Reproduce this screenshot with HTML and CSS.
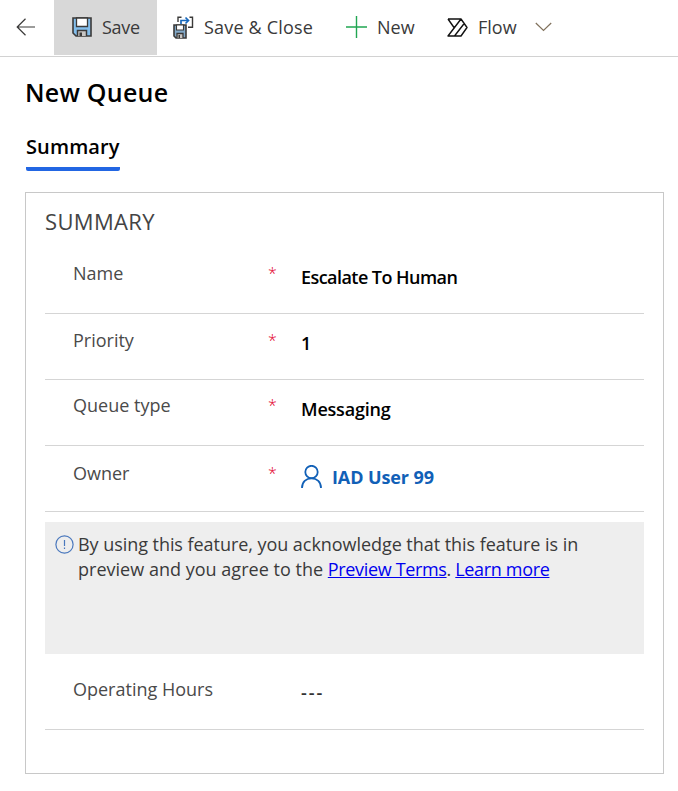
FILE: index.html
```html
<!DOCTYPE html>
<html lang="en">
<head>
<meta charset="utf-8">
<title>New Queue</title>
<link rel="stylesheet" href="styles.css">
</head>
<body>
<header class="commands">
  <button class="command back" aria-label="Back">
    <svg width="20" height="18" viewBox="0 0 20 18" fill="none" stroke="#3b3a39" stroke-width="1.2"><path d="M19 9H1.2M9.500 .8 1.200 9l8.300 8.200"/></svg>
  </button>
  <button class="command save">
    <svg width="20" height="20" viewBox="0 0 20 20"><path d="M1 1h18v18H4l-3-3z" fill="#83beec" stroke="#3b3a39" stroke-width="1.600"/><path d="M4.500 1h11v8.500h-11z" fill="#fff" stroke="#3b3a39" stroke-width="1.300"/><path d="M5.500 19v-5.500h9V19" fill="#c8c6c4" stroke="#3b3a39" stroke-width="1.500"/><path d="M7.500 15.500H10V19H7.500z" fill="#3b3a39"/></svg>
    <span class="t-save">Save</span>
  </button>
  <button class="command save-close">
    <svg width="21" height="23" viewBox="0 0 21 23" fill="none"><path d="M1 9h12v13H3l-2-2z" fill="#83a9c8" stroke="#3b3a39" stroke-width="1.600"/><path d="M3.500 9h7v5h-7z" fill="#fff" stroke="#3b3a39" stroke-width="1.100"/><path d="M4 22v-4.500h6V22" fill="#c8c6c4" stroke="#3b3a39" stroke-width="1.300"/><path d="M5.500 19H7v3H5.500z" fill="#3b3a39"/><path d="M8.500 1.200H5V6M16.500 1.200h3v10H15" stroke="#3b3a39" stroke-width="1.400"/><path d="M8 8V4.500h7M12.500 1.500l3 3-3 3" stroke="#1869bd" stroke-width="1.700"/></svg>
    <span class="t-close">Save &amp; Close</span>
  </button>
  <button class="command new">
    <svg width="21" height="22" viewBox="0 0 21 22" stroke="#21a652" stroke-width="1.400"><path d="M10.500 0v22M0 11h21"/></svg>
    <span>New</span>
  </button>
  <button class="command flow">
    <svg width="21" height="19" viewBox="0 0 21 19" fill="none" stroke="#111" stroke-width="1.400" stroke-linejoin="round"><path d="M1 1h13l6 8.500-6 8.500H1L14 1M1 1l6 8.500M7.500 18l9.700-12.500"/></svg>
    <span>Flow</span>
    <svg class="chevron" width="17" height="10" viewBox="0 0 17 10" fill="none" stroke="#80715c" stroke-width="1.200"><path d="M.8 1 8.500 8.500 16.200 1"/></svg>
  </button>
</header>
<main class="page">
  <h1 class="title">New Queue</h1>
  <nav><a class="tab">Summary</a></nav>
  <section class="card">
    <h2 class="section-title">SUMMARY</h2>
    <div class="field first"><span class="label">Name</span><span class="required">*</span><span class="value v-name">Escalate To Human</span></div>
    <div class="field priority"><span class="label">Priority</span><span class="required">*</span><span class="value">1</span></div>
    <div class="field type"><span class="label">Queue type</span><span class="required">*</span><span class="value v-type">Messaging</span></div>
    <div class="field owner"><span class="label">Owner</span><span class="required">*</span><span class="value lookup"><svg width="21" height="24" viewBox="0 0 21 24" fill="none" stroke="#1160b7" stroke-width="1.800"><circle cx="10.500" cy="7" r="6.200"/><path d="M1 23c0-6 4-9.700 9.500-9.700S20 17 20 23"/></svg><span>IAD User 99</span></span></div>
    <div class="notice">
      <svg width="19" height="19" viewBox="0 0 19 19" fill="none" stroke="#4a78bd" stroke-width="1.200"><circle cx="9.500" cy="9.500" r="8.600"/><path d="M9.500 5v6M9.500 12.500V14"/></svg>
      <p class="message">By using this feature, you acknowledge that this feature is in<br><span class="lead">preview and you agree to the </span><span class="links"><a href="#">Preview Terms</a>. <a href="#">Learn more</a></span></p>
    </div>
    <div class="field hours"><span class="label">Operating Hours</span><span></span><span class="value v-empty">---</span></div>
  </section>
</main>
</body>
</html>
```
FILE: styles.css
```css
* { box-sizing: border-box; }
body { margin: 0; background: #fff; color: #3a3a3a; font: 400 18px/24px "Open Sans", "Noto Sans", sans-serif; }
svg { display: block; flex: none; }
.commands { display: flex; height: 57px; border-bottom: 1px solid #d2d2d2; }
.command { display: flex; align-items: center; height: 55px; padding: 0 0 1px; border: 0; background: none; color: #3a3a3a; font: inherit; white-space: nowrap; }
.back { width: 54px; padding-left: 16px; }
.save { width: 103px; padding-left: 18px; gap: 10px; background: #d8d8d8; }
.save-close { width: 189px; padding-left: 16px; gap: 10px; }
.new { width: 101px; gap: 10px; }
.flow { gap: 10px; }
.chevron { margin-left: 8px; }
.t-save { letter-spacing: -.3px; }
.t-close { letter-spacing: .18px; }
.page { padding: 0 14px 0 25px; }
.title { margin: 18px 0 0; color: #000; font-size: 25px; font-weight: 600; line-height: 34px; letter-spacing: .25px; }
.tab { display: block; width: 94px; height: 36px; margin: 26px 0 0 1px; border-bottom: 4px solid #2266e3; border-radius: 2px; color: #000; font-size: 20px; font-weight: 600; letter-spacing: .12px; white-space: nowrap; }
.card { height: 582px; margin-top: 21px; padding: 14px 19px 0; border: 1px solid #c8c8c8; }
.section-title { margin: 0 0 2px; color: #444; font-size: 22px; font-weight: 400; line-height: 28px; letter-spacing: .35px; }
.field { display: grid; grid-template-columns: 195px 33px 1fr; align-items: start; height: 66px; padding: 14px 0 0 28px; border-bottom: 1px solid #d5d5d5; white-space: nowrap; }
.first { height: 77px; padding-top: 24px; }
.type { padding-top: 13px; }
.owner { padding-top: 15px; }
.label { color: #4a4a4a; }
.required { color: #e3002b; font-size: 16px; font-weight: 300; }
.value { padding-top: 4px; color: #000; font-weight: 600; }
.priority .value { padding-top: 3px; }
.v-name { letter-spacing: -.55px; }
.v-type { letter-spacing: -.2px; }
.v-empty { letter-spacing: 1.9px; color: #333; }
.lookup { display: flex; align-items: center; gap: 10px; color: #1160b7; font-weight: 700; letter-spacing: -.1px; }
.notice { display: flex; gap: 4px; height: 132px; margin-top: 10px; padding: 10px 0 0 10px; background: #eee; }
.notice svg { margin-top: 3px; }
.message { margin: 0; line-height: 25px; letter-spacing: -.05px; white-space: nowrap; }
.lead { letter-spacing: .02px; }
.links { letter-spacing: -.34px; }
a { color: #00e; }
.hours { height: 76px; padding-top: 23px; }
.hours .value { padding-top: 3px; }
```
